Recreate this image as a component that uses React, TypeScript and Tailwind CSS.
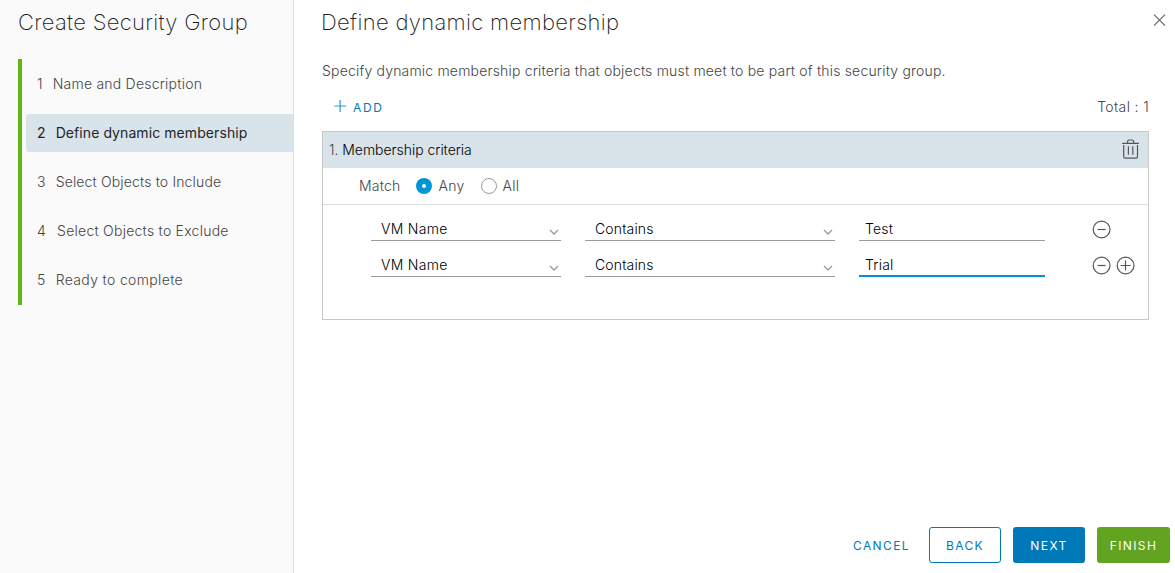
import { useState } from "react";
import type { ReactNode } from "react";

const steps = [
  { n: "1", label: "Name and Description", style: "gap-[10px] tracking-[0.22px]" },
  { n: "2", label: "Define dynamic membership", style: "gap-[10px] tracking-[0.08px]" },
  { n: "3", label: "Select Objects to Include", style: "gap-[10px] tracking-[0.15px]" },
  { n: "4", label: "Select Objects to Exclude", style: "gap-[11px] tracking-[0.25px]" },
  { n: "5", label: "Ready to complete", style: "gap-[10px] tracking-[0.35px]" },
];

function CircleIcon({ plus = false }: { plus?: boolean }) {
  return (
    <svg width="20" height="20" viewBox="0 0 20 20" fill="none" stroke="#565656" strokeWidth="1.2">
      <circle cx="9.6" cy="9.5" r="8.4" />
      <path d={plus ? "M4.6 9.5H14.6M9.5 4.5V14.5" : "M5.6 9.5H13.6"} />
    </svg>
  );
}

function SelectField({ value, className }: { value: string; className: string }) {
  return (
    <div className={`flex h-6 items-center justify-between border-b border-[#9a9a9a] pl-[10px] pr-[1px] ${className}`}>
      <span>{value}</span>
      <svg className="mt-[7px]" width="12" height="8" viewBox="0 0 12 8" fill="none" stroke="#9a9a9a" strokeWidth="1.3">
        <path d="M2 2L6 6L10 2" />
      </svg>
    </div>
  );
}

function Row({ value, active, children }: { value: string; active?: boolean; children: ReactNode }) {
  return (
    <div className="flex h-9 items-start pl-12 text-black">
      <SelectField value="VM Name" className="w-[190px] tracking-[0.3px]" />
      <SelectField value="Contains" className="ml-6 w-[250px] tracking-[0.15px]" />
      <div
        className={`ml-6 h-6 w-[186px] pl-[6px] tracking-[0.2px] ${
          active ? "border-b-2 border-[#0094d2]" : "border-b border-[#9a9a9a]"
        }`}
      >
        {value}
      </div>
      <div className="ml-[47px] mt-[3px] flex gap-1">{children}</div>
    </div>
  );
}

function Radio({ label, checked, onSelect }: { label: string; checked: boolean; onSelect: () => void }) {
  return (
    <button className="flex items-center gap-[6px]" onClick={onSelect}>
      <span
        className={`flex size-4 items-center justify-center rounded-full ${
          checked ? "bg-[#0095d3]" : "border border-[#9a9a9a]"
        }`}
      >
        {checked && <span className="size-1 rounded-full bg-white" />}
      </span>
      <span className="tracking-[0.3px]">{label}</span>
    </button>
  );
}

export default function App() {
  const [match, setMatch] = useState("Any");
  return (
    <div className="flex h-[573px] w-[1175px] overflow-hidden bg-white font-['Inter',sans-serif] text-[14px] font-light leading-6 text-[#454545]">
      <aside className="w-[294px] shrink-0 border-r border-[#dedede] bg-[#fafafa] pl-[18px]">
        <h1 className="pt-[10px] text-[22px] font-extralight leading-6 tracking-[0.32px] text-[#202020]">Create Security Group</h1>
        <ol className="mt-[25px] flex h-[246px] flex-col gap-[11px] border-l-4 border-[#61b715] pl-1 pt-[6px]">
          {steps.map((s) => (
            <li
              key={s.n}
              className={`flex h-[38px] shrink-0 items-center rounded-l-[3px] pl-[11px] ${s.style} ${
                s.n === "2" ? "bg-[#d9e4ea] font-normal text-[#252525]" : ""
              }`}
            >
              <span>{s.n}</span>
              <span>{s.label}</span>
            </li>
          ))}
        </ol>
      </aside>
      <main className="flex min-w-0 flex-1 flex-col">
        <header className="flex h-11 items-start justify-between pl-[27px] pr-2 pt-[10px]">
          <h2 className="text-[22px] font-extralight leading-6 tracking-[0.32px] text-[#202020]">Define dynamic membership</h2>
          <svg className="mt-[3px]" width="14" height="14" viewBox="0 0 14 14" fill="none" stroke="#666666" strokeWidth="1.2">
            <path d="M1 1.7L12 12.7M12 1.7L1 12.7" />
          </svg>
        </header>
        <div className="pl-7 pr-[26px]">
          <p className="pt-[15px] tracking-[0.185px]">Specify dynamic membership criteria that objects must meet to be part of this security group.</p>
          <div className="mt-3 flex h-6 items-center justify-between">
            <button className="flex items-center gap-[7px] pl-3 text-[12px] font-normal tracking-[1.7px] text-[#0079b8]">
              <svg className="-mt-[3px]" width="12" height="12" viewBox="0 0 12 12" stroke="#3394c6" strokeWidth="1.2">
                <path d="M0.3 6H12M6.1 0V12" />
              </svg>
              <span className="pt-px">ADD</span>
            </button>
            <span className="tracking-[0.35px]">Total : 1</span>
          </div>
          <section className="mt-3 h-[189px] border border-[#c8c8c8]">
            <div className="flex h-9 items-center justify-between bg-[#d9e4ea] pl-[6px] pr-2">
              <span className="tracking-[-0.04px] text-black"><span className="text-[#454545]">1.</span> Membership criteria</span>
              <svg className="-mt-[3px]" width="18" height="20" viewBox="0 0 18 20" fill="none" stroke="#565656" strokeWidth="1.2">
                <path d="M0.2 4.3H17M5.6 4V2.4Q5.6 1 7 1H10.2Q11.6 1 11.6 2.4V4M1.7 6V17.8Q1.7 19.2 3.1 19.2H14.1Q15.5 19.2 15.5 17.8V6M6.4 7.3V15.7M10.8 7.3V15.7" />
              </svg>
            </div>
            <div className="flex h-[37px] items-center border-b border-[#dedede] pl-9">
              <span className="mr-4 tracking-[0.2px]">Match</span>
              <Radio label="Any" checked={match === "Any"} onSelect={() => setMatch("Any")} />
              <span className="w-4" />
              <Radio label="All" checked={match === "All"} onSelect={() => setMatch("All")} />
            </div>
            <div className="pt-3">
              <Row value="Test"><CircleIcon /></Row>
              <Row value="Trial" active><CircleIcon /><CircleIcon plus /></Row>
            </div>
          </section>
        </div>
        <footer className="mb-[10px] mr-[5px] mt-auto flex h-9 justify-end text-[12px] font-normal tracking-[1.4px]">
          <button className="mr-[19px] pt-[2px] text-[#0079b8]">CANCEL</button>
          <button className="mr-3 w-[72px] rounded-[3px] border border-[#0079b8] pt-[2px] text-[#0079b8]">BACK</button>
          <button className="mr-3 w-[72px] rounded-[3px] bg-[#0079b8] pt-[2px] text-white">NEXT</button>
          <button className="w-[73px] rounded-[3px] bg-[#62a420] pt-[2px] text-white">FINISH</button>
        </footer>
      </main>
    </div>
  );
}
